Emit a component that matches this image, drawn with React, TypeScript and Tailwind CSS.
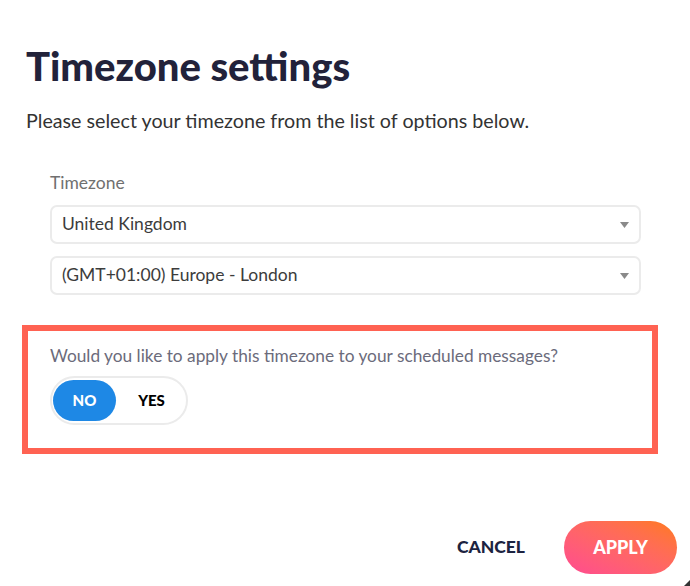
import { useState } from 'react';

function Select({ value }: { value: string }) {
  return (
    <div className="flex h-[39px] items-center justify-between rounded-[7px] border-2 border-[#ebebeb] pl-[10px] pr-[10px]">
      <span className="text-[17.5px] text-[#3c3c3c]">{value}</span>
      <svg width="9" height="6" viewBox="0 0 9 6" className="text-[#8a8a8a]">
        <path d="M0 0H9L4.5 6Z" fill="currentColor" />
      </svg>
    </div>
  );
}

export default function App() {
  const [apply, setApply] = useState(false);

  return (
    <div
      className="relative h-[586px] w-[690px] overflow-hidden bg-white pl-[26px] pt-[42px]"
      style={{ fontFamily: 'Lato, "Noto Sans", sans-serif' }}
    >
      <h1 className="text-[40px] font-black leading-[48px] text-[#22223a]">Timezone settings</h1>
      <p className="mt-[19px] text-[19.7px] leading-[24px] text-[#333333]">
        Please select your timezone from the list of options below.
      </p>

      <div className="ml-[24px] mr-[23px] mt-[38px]">
        <div className="text-[17.5px] leading-[24px] text-[#707070]">Timezone</div>
        <div className="mt-[10px] flex flex-col gap-[12px] pr-[26px]">
          <Select value="United Kingdom" />
          <Select value="(GMT+01:00) Europe - London" />
        </div>
      </div>

      <div className="ml-[-4px] mr-[32px] mt-[30px] border-[6px] border-[#ff6252] pb-[23px] pl-[22px] pt-[13px]">
        <div className="text-[17.3px] leading-[24px] text-[#6b6b7b]">
          Would you like to apply this timezone to your scheduled messages?
        </div>
        <div className="mt-[8px] flex h-[49px] w-[138px] items-center rounded-full border-2 border-[#ebebeb] p-[1px]">
          <button
            onClick={() => setApply(false)}
            className={`flex h-[41px] w-[63px] items-center justify-center rounded-full text-[15px] font-black ${
              !apply ? 'bg-[#1e88e5] text-white' : 'text-black'
            }`}
          >
            NO
          </button>
          <button
            onClick={() => setApply(true)}
            className={`ml-[4px] flex h-[41px] w-[63px] items-center justify-center rounded-full text-[15px] font-black ${
              apply ? 'bg-[#1e88e5] text-white' : 'text-black'
            }`}
          >
            YES
          </button>
        </div>
      </div>

      <div className="mr-[13px] mt-[67px] flex items-center justify-end gap-[39px]">
        <button className="text-[17.5px] font-black text-[#1c2340]">CANCEL</button>
        <button className="h-[53px] w-[113px] rounded-full bg-gradient-to-tr from-[#ff4a90] to-[#ff7a0c] text-[18px] font-black text-white">
          APPLY
        </button>
      </div>

      <svg width="6" height="6" viewBox="0 0 6 6" className="absolute bottom-0 right-0">
        <path d="M6 0V6H0Z" fill="#333" />
      </svg>
    </div>
  );
}
